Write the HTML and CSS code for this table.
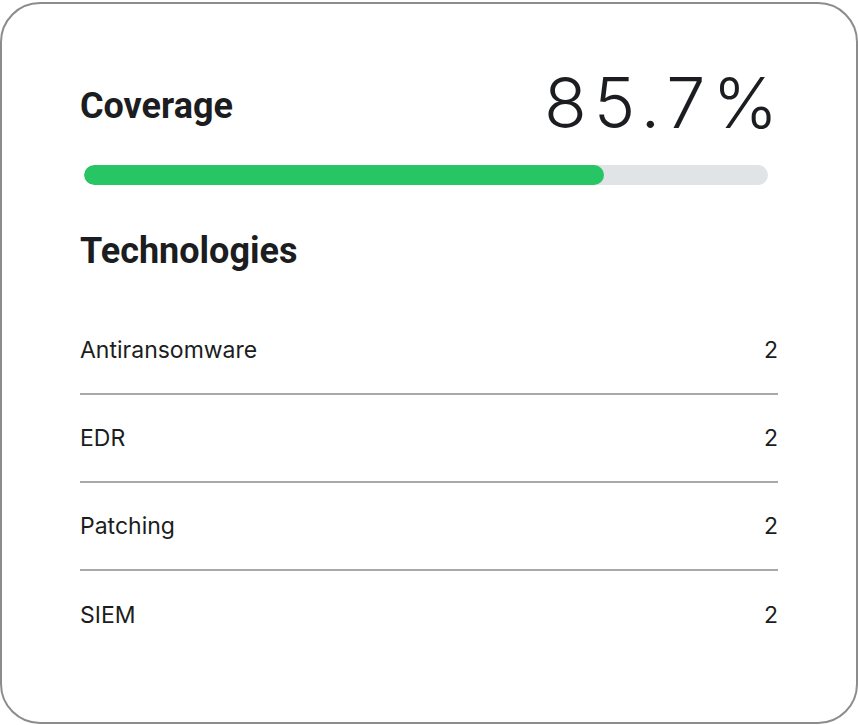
FILE: index.html
```html
<!DOCTYPE html>
<html>
<head>
<meta charset="utf-8">
<link rel="stylesheet" href="styles.css">
</head>
<body>
<div class="card">
  <div class="head">
    <h2 class="title">Coverage</h2>
    <div class="pct">85.7%</div>
  </div>
  <div class="track"><div class="fill" style="width:76%"></div></div>
  <h2 class="subtitle">Technologies</h2>
  <ul class="list">
    <li class="row"><span>Antiransomware</span><span>2</span></li>
    <li class="row"><span>EDR</span><span>2</span></li>
    <li class="row"><span>Patching</span><span>2</span></li>
    <li class="row"><span>SIEM</span><span>2</span></li>
  </ul>
</div>
</body>
</html>
```
FILE: styles.css
```css
* { box-sizing: border-box; }
html, body { margin: 0; padding: 0; background: #fff; }
body { padding-top: 2px; }
.card {
  width: 858px;
  height: 722px;
  border: 2px solid #8c8c8c;
  border-radius: 40px;
  padding: 62px 78px 0 78px;
  color: #1b1d20;
  font-family: "Inter", sans-serif;
}
.head {
  display: flex;
  justify-content: space-between;
  align-items: center;
  height: 80px;
}
.title {
  margin: 0;
  font-family: "Roboto", sans-serif;
  font-weight: 700;
  font-size: 36px;
}
.pct {
  font-family: "Inter", sans-serif;
  font-weight: 300;
  font-size: 70px;
  line-height: 80px;
  letter-spacing: 7px;
  margin-right: -7px;
  margin-top: -7px;
}
.track {
  margin: 19px 10px 0 4px;
  height: 20px;
  border-radius: 10px;
  background: #e0e4e7;
  overflow: hidden;
}
.fill {
  height: 100%;
  background: #28c564;
  border-radius: 10px;
}
.subtitle {
  margin: 46px 0 0 0;
  font-family: "Roboto", sans-serif;
  font-weight: 700;
  font-size: 36px;
  line-height: 40px;
}
.list {
  list-style: none;
  margin: 36px 0 0 0;
  padding: 0;
}
.row {
  display: flex;
  justify-content: space-between;
  align-items: center;
  height: 88px;
  font-size: 23px;
  border-bottom: 2px solid #a9a9a9;
}
.row:last-child { border-bottom: none; }
```
